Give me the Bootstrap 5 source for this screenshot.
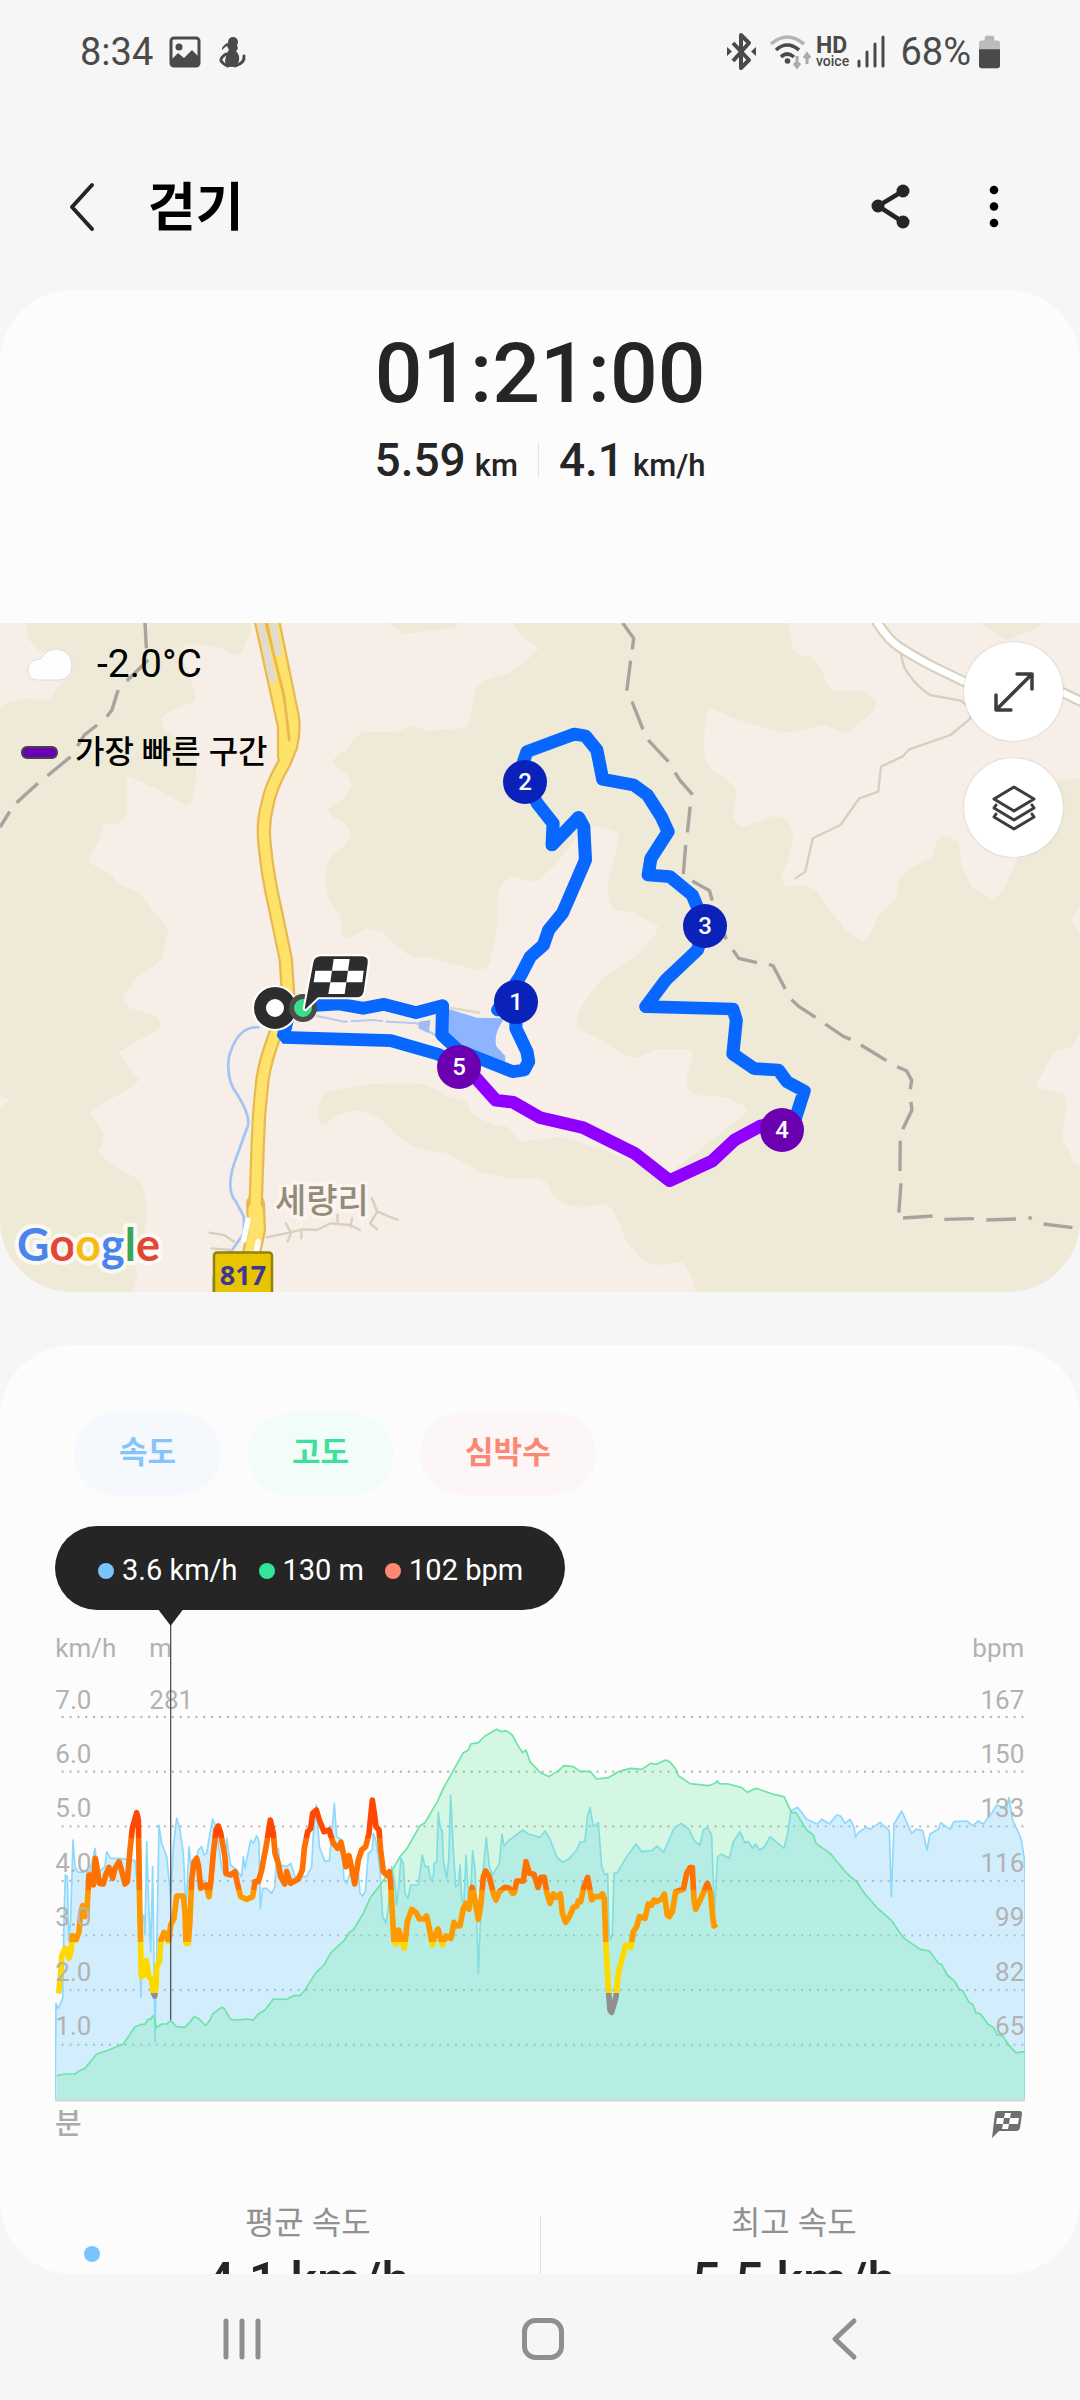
<!DOCTYPE html>
<html lang="ko">
<head>
<meta charset="utf-8">
<meta name="viewport" content="width=device-width, initial-scale=1">
<title>걷기</title>
<link href="https://cdn.jsdelivr.net/npm/bootstrap@5.3.0/dist/css/bootstrap.min.css" rel="stylesheet">
<style>
body{background:#f6f6f6;color:#252525;font-family:Roboto,"Noto Sans CJK KR",sans-serif;}
.screen{height:100vh;overflow:hidden}
.btn-plain{background:none;border:0;padding:0;display:flex;align-items:center;justify-content:center}
svg{display:block}
.statusbar{height:104px;padding:0 80px;color:#4a4a4a;font-size:38px;line-height:44px}
.titlebar{height:166px;margin-top:20px;padding:0 66px}
.titlebar h1{font-size:52px;line-height:60px;font-weight:700;color:#000;margin:4px 0 0 48px}
.more-btn{margin-left:63px}
.panel{background:#fcfcfc;border-radius:72px;overflow:hidden}
.summary{padding:34px 0 133px}
.clock{font-size:84px;line-height:100px;font-weight:500}
.figures{margin-top:6px;font-size:46px;line-height:60px;font-weight:500}
.figures .unit{font-size:31px;line-height:31px;margin-left:9px}
.figures .rule{width:1px;height:36px;background:#e2e2e2;margin:0 20px}
.mapbox{height:669px}
.mapbox>svg{width:100%;height:100%}
.map-info{left:21px;top:15px;color:#000}
.temp{font-size:39px;line-height:52px}
.temp span{margin-left:23px}
.legend{font-size:32px;line-height:44px;font-weight:500;margin-top:40px}
.legend i{width:37px;height:13px;border-radius:6px;background:#6a00b4;border:2px solid #444;margin-right:17px}
.map-tools{right:17px;top:19px;gap:17px}
.map-tools .btn-plain{width:99px;height:99px;border-radius:50%;background:#fff;box-shadow:0 0 2px #bbb}
.detail{margin-top:53px;min-height:0}
.chips{padding:68px 74px 0;gap:26px}
.chip{height:82px;border:0;border-radius:41px;padding:0 45px 2px;font-size:31px;font-weight:700}
.chip-speed{background:#f5f9fd;color:#86c5fb}
.chip-alt{background:#f2fcf8;color:#3fdf9c}
.chip-heart{background:#fcf6f6;color:#fb8872}
.bubble{margin:31px 55px 0;height:84px;border-radius:42px;background:#252525;color:#fff;padding:6px 42px 0 43px;font-size:29px;gap:21px;width:fit-content;white-space:nowrap}
.dot{width:16px;height:16px;border-radius:50%;flex:none}
.blue-dot{background:#7ac4fe}.green-dot{background:#35e49b}.red-dot{background:#ff8870}
.chart{margin:0 55px}
.chart svg{width:100%;height:auto}
.chart-foot{margin:0 58px 0 55px;padding-top:1px;color:#aaa;font-size:29px;line-height:36px;font-weight:500}
.stats{margin-top:61px;padding:0 33px}
.stat{flex:1 1 0;text-align:center}
.stat dt{font-size:32px;line-height:44px;font-weight:400;color:#919191;margin-top:-2px}
.stat dd{font-size:51px;line-height:60px;font-weight:500;margin:7px 0 0}
.stats .blue-dot{margin:43px 0 0 51px}
.stats .rule{width:1px;background:#e0e0e0;margin-top:12px}
.navkeys{height:126px;padding:4px 0 0 6px}
.navkeys .btn-plain{width:28%;height:100%}
</style>
<script src="https://cdn.jsdelivr.net/npm/bootstrap@5.3.0/dist/js/bootstrap.bundle.min.js"></script>
</head>
<body>
<div class="screen d-flex flex-column">

<div class="statusbar d-flex align-items-center justify-content-between flex-shrink-0">
  <div class="d-flex align-items-center">
    <span>8:34</span>
    <svg class="ms-3" width="32" height="32" viewBox="0 0 32 32"><rect x="2" y="2" width="28" height="28" rx="3" fill="none" stroke="#4a4a4a" stroke-width="3"/><circle cx="10" cy="11" r="3.5" fill="#4a4a4a"/><path d="M2 30V24L9 17L15 22L23 14L30 21V30Z" fill="#4a4a4a"/></svg>
    <svg class="ms-3" width="30" height="32" viewBox="0 0 30 32"><g fill="#4a4a4a"><circle cx="16" cy="6" r="5"/><path d="M10 10Q8 11 5 14Q4 11 10 7L20 9Q22 13 19 15Q23 19 22 25Q20 31 15 31Q9 31 8 25Q10 15 12 14Z"/></g><path d="M9 18Q3 22 4 25Q6 28 11 30M27 20Q28 27 18 30" fill="none" stroke="#4a4a4a" stroke-width="3" stroke-linecap="round"/></svg>
  </div>
  <div class="d-flex align-items-center">
    <svg width="174" height="40" viewBox="0 0 174 40" font-family="Roboto">
      <path d="M7 11L23 28L15 36V3L23 11L7 29" fill="none" stroke="#4a4a4a" stroke-width="4" stroke-linejoin="round"/><path d="M1 15L6 19.500L1 24ZM30 15L25 19.500L30 24Z" fill="#4a4a4a"/>
      <g fill="none" stroke-width="3.600"><path d="M45 12Q61 -2 78 12" stroke="#b5b5b5"/><path d="M50 18Q61 8 73 18M55 25Q61 19 68 25" stroke="#4a4a4a"/></g>
      <circle cx="61.500" cy="29" r="2.800" fill="#4a4a4a"/><path d="M71 24V34M68 31L71 35L74 31M81 32V23M78 26L81 22L84 26" fill="none" stroke="#aaa" stroke-width="3"/>
      <text x="90" y="21" font-size="23" font-weight="700" fill="#4a4a4a">HD</text><text x="90" y="34" font-size="14" font-weight="500" fill="#4a4a4a">voice</text>
      <path d="M133 29V34M141 20V34M149 12V34M157 5V34" stroke="#4a4a4a" stroke-width="3" stroke-linecap="round"/>
    </svg>
    <span>68%</span>
    <svg class="ms-2" width="21" height="34" viewBox="0 0 22 34"><rect x="6" width="10" height="7" rx="2" fill="#b5b5b5"/><rect y="5" width="22" height="29" rx="3" fill="#bcbcbc"/><path d="M0 14H22V31Q22 34 19 34H3Q0 34 0 31Z" fill="#4a4a4a"/></svg>
  </div>
</div>

<header class="titlebar d-flex align-items-center flex-shrink-0">
  <button class="btn-plain" type="button" aria-label="뒤로"><svg width="34" height="52" viewBox="0 0 34 52"><path d="M26 4L6 26L26 48" fill="none" stroke="#252525" stroke-width="4" stroke-linecap="round" stroke-linejoin="round"/></svg></button>
  <h1>걷기</h1>
  <button class="btn-plain ms-auto" type="button" aria-label="공유"><svg width="42" height="48" viewBox="0 0 42 48"><path d="M34 8L9 23L34 39" fill="none" stroke="#252525" stroke-width="4.500"/><g fill="#252525"><circle cx="34" cy="8" r="6.500"/><circle cx="9" cy="23" r="6.500"/><circle cx="34" cy="39" r="6.500"/></g></svg></button>
  <button class="btn-plain more-btn" type="button" aria-label="더보기"><svg width="40" height="48" viewBox="0 0 40 48"><circle cx="20" cy="7" r="4.300"/><circle cx="20" cy="23.500" r="4.300"/><circle cx="20" cy="40" r="4.300"/></svg></button>
</header>

<section class="panel flex-shrink-0">
  <div class="summary text-center">
    <div class="clock">01:21:00</div>
    <div class="figures d-flex justify-content-center align-items-center">
      <div>5.59<span class="unit">km</span></div><span class="rule"></span><div>4.1<span class="unit">km/h</span></div>
    </div>
  </div>
  <div class="mapbox position-relative">
    <svg viewBox="0 0 1080 669" preserveAspectRatio="xMidYMid slice" role="img" aria-label="경로 지도">
      <rect width="1080" height="669" fill="#f7eee8"/>
      <g transform="translate(0 -3) scale(.3444 .33333)">
        <g fill="#efead7">
          <path d="M75 9L85 60L110 90L150 105L210 150L170 200L150 230L130 242L80 235L30 245L0 265V1425L25 1440L0 1468V2016H385L400 1960L385 1920L415 1850L428 1795L420 1720Q415 1690 395 1675L320 1630L285 1595L300 1560V1540L260 1475L375 1405L405 1380L370 1340L345 1295L440 1240Q470 1220 465 1205T445 1184L380 1165Q350 1145 358 1125L400 1070L440 1045L470 1015L475 980L488 940L485 920L440 870L405 820L340 790L330 770L255 725L290 655L300 615L345 610Q370 590 370 550L368 480Q370 465 385 475L450 505L540 555Q558 555 560 530L568 480L570 420Q555 370 500 345Q470 330 468 300Q475 285 500 270L555 250Q572 240 568 225L530 110V85Q540 72 560 72L640 85L685 105Q700 105 705 90L725 45L730 9Z"/>
          <path d="M1130 9L1170 42L1320 25L1335 9ZM2848 9L2888 40L2923 60L2988 35L3033 9ZM1490 9L1505 38L1565 85L1530 120L1480 160Q1385 180 1380 215L1370 260Q1368 325 1335 325L1240 332L1200 315L1150 335L1060 335Q1030 345 1010 385L965 420L975 440L1010 465L1022 495L1000 535L948 570L965 590L1005 610L1022 645L1000 680Q945 710 945 770Q945 845 990 885V945L1005 958L1065 925L1110 935L1165 990L1200 1015L1240 1010L1310 1030L1380 1050Q1425 1050 1425 1010L1445 920V820Q1460 780 1490 770L1540 785L1568 775L1608 740L1668 660L1700 610L1748 625Q1800 625 1796 660L1768 780Q1755 850 1788 872L1833 875L1913 920L1898 950L1843 1010Q1750 1065 1723 1110Q1660 1190 1678 1225L1728 1250L1788 1290Q1840 1325 1862 1308L1908 1288H1998Q2010 1290 2010 1310L1993 1380Q2000 1430 2048 1427L2108 1432L2168 1460V1475L2068 1560L1968 1640L1938 1670L1768 1595L1628 1550L1510 1565L1475 1520L1430 1515L1370 1480L1355 1445L1300 1430Q1240 1390 1200 1390H1120L1050 1395L940 1415L925 1460V1505Q930 1518 945 1512Q990 1470 1040 1472Q1100 1480 1150 1545Q1200 1588 1240 1590L1300 1600L1390 1655L1490 1678L1568 1675L1588 1690Q1610 1760 1698 1763L1758 1752Q1785 1760 1813 1855Q1870 1940 1908 1935L1983 1927L2008 1970L2023 2016H3136V475L3078 480L2988 650L2953 720L2918 800L2888 840L2823 805L2793 740L2783 670Q2750 630 2718 665L2708 710L2628 755L2608 780L2603 835L2553 885L2528 940L2508 965L2458 935L2418 880L2368 810L2338 795L2283 800L2268 770L2288 720L2303 650Q2300 590 2248 588L2153 622L2128 600L2138 520Q2130 485 2073 455Q2040 425 2043 360L2053 275Q2060 260 2075 270L2128 295L2188 315L2268 338L2328 332L2388 315L2458 340L2508 300L2543 265V240L2508 212H2428Q2400 205 2395 175Q2375 110 2343 110Q2300 100 2300 70L2288 9Z"/>
        </g>
        <path fill="#f7eee8" d="M3136 860L3108 900L3136 945ZM3136 1235L3113 1280L3058 1295L3048 1320L3008 1395L3013 1405L3088 1420L3098 1450L3083 1560L3103 1590L3118 1635H3136Z"/>
        <g fill="none" stroke-linejoin="round" stroke-linecap="round">
          <g stroke="#d6d0c1" stroke-width="7"><path d="M2615 100L2625 140Q2650 190 2700 225L2790 242L2818 265V295L2760 345L2640 388L2620 410L2558 440L2550 515L2495 535L2440 615L2360 655L2338 755L2310 775"/><path d="M2548 9Q2580 60 2610 80Q2670 120 2720 145L2810 190L2900 220L3080 215L3136 243" stroke-width="33"/></g>
          <path d="M2548 9Q2580 60 2610 80Q2670 120 2720 145L2810 190L2900 220L3080 215L3136 243" stroke="#fff" stroke-width="20"/>
          <g stroke="#a6a49f" stroke-width="10" stroke-linecap="butt">
            <path d="M421 9L425 85M430 120L368 183M343 210L325 270L310 290M282 315L245 345L225 378M205 410L138 467M110 490L48 548M28 575L0 622"/>
            <path d="M1808 9L1840 55L1836 88M1831 122L1820 212M1835 245L1867 328M1882 360L1941 425M1960 458L1975 482L2011 524M2004 560L1996 637M1991 675L1984 762M2010 783L2060 812L2068 842M2098 920L2108 958M2128 990L2145 1015L2198 1028M2233 1033L2245 1038L2280 1107M2298 1139L2320 1160L2368 1192M2396 1212L2450 1250L2470 1258M2500 1275L2574 1322M2605 1340L2632 1352L2647 1380L2643 1408M2645 1446L2648 1470L2621 1528M2614 1562L2613 1653M2616 1690L2610 1778M2622 1794L2708 1788M2742 1798L2828 1796M2864 1800L2950 1797M2986 1793L2996 1795M3030 1812L3114 1823"/>
          </g>
          <path d="M750 1222Q690 1218 665 1310Q655 1380 690 1425Q735 1500 715 1530L680 1630Q655 1710 685 1745L708 1790V1840L620 1970V2016" stroke="#a5c3f5" stroke-width="8"/>
          <path d="M920 1188L1000 1205L1080 1200L1130 1205L1210 1210L1270 1250" stroke="#b8c8f1" stroke-width="6" stroke-dasharray="90 12"/><path d="M1215 1205L1250 1200L1245 1240L1215 1225Z" fill="#a3baf0"/>
          <path d="M1310 1164L1390 1178" stroke="#ddd8c8" stroke-width="8"/>
          <path fill="#8db5ff" d="M1295 1165L1385 1193L1465 1195Q1430 1245 1442 1280L1467 1308V1330L1350 1290L1290 1240Z"/>
          <g stroke="#d8cfc0" stroke-width="7"><path d="M775 1852L830 1840L880 1828L920 1830L960 1810L1015 1815L1045 1830M830 1810L845 1840L835 1865M875 1830V1855M980 1785V1810M1022 1795L1018 1820M1080 1735L1095 1775L1155 1800M1095 1775L1075 1810L1095 1828M608 1838L650 1845L680 1865M615 1885L670 1890"/></g>
          <g stroke="#e7b950" stroke-width="42"><path d="M757 0L825 320L825 410"/><path d="M792 0L850 290Q856 330 845 380L825 430Q785 500 775 560Q762 610 768 670Q777 770 800 870L830 1020L838 1150L800 1240Q770 1320 762 1380Q750 1480 748 1580L742 1760L745 1830L730 1900"/><path d="M742 1750L745 1830L730 1900" stroke-width="55"/></g>
          <g stroke="#ffe26a" stroke-width="29"><path d="M757 0L825 320L825 410"/><path d="M792 0L850 290Q856 330 845 380L825 430Q785 500 775 560Q762 610 768 670Q777 770 800 870L830 1020L838 1150L800 1240Q770 1320 762 1380Q750 1480 748 1580L742 1760L745 1830L730 1900"/><path d="M742 1770L745 1830L730 1900" stroke-width="42"/></g>
          <path d="M772 9L825 230L840 360" stroke="#e7b950" stroke-width="8"/>
          <path d="M755 0L792 180M792 0L808 98" stroke="#e1dad1" stroke-width="20"/>
          <path d="M720 1800L708 1860M750 1865L744 1895" stroke="#fff" stroke-width="16"/>
          <g stroke="#0867ff" stroke-width="38" stroke-linejoin="bevel" stroke-linecap="butt">
            <path d="M890 1158L985 1152L1055 1165L1115 1153L1208 1178L1285 1157L1283 1245L1330 1290L1488 1355L1522 1350L1535 1325L1530 1295L1498 1225L1498 1150L1445 1170L1510 1070L1540 1010L1578 975L1593 930L1633 880L1700 720L1695 620L1680 592L1603 675L1606 610L1560 550L1526 485L1520 425L1530 395L1668 342L1700 348L1733 390L1750 478L1840 495L1880 525L1920 590L1940 635L1890 715L1882 765L1945 770L2010 825L2048 918L2025 990L1933 1080L1875 1160L2128 1167L2138 1200L2128 1302L2190 1346L2260 1350L2285 1385L2335 1413L2302 1520" stroke-linejoin="round"/>
            <path d="M1320 1325L1270 1302L1135 1262L822 1252L835 1195"/>
          </g>
          <path d="M2271 1505L2208 1518L2133 1560L2068 1623L1944 1682L1843 1600L1693 1523L1568 1493L1490 1447L1440 1441L1335 1320" stroke="#9100ff" stroke-width="38"/>
        </g>
      </g>
      <g font-family="Roboto" font-weight="500" font-size="24" text-anchor="middle" fill="#fff">
        <circle cx="516" cy="379" r="22" fill="#0a22b9"/><text x="516" y="387">1</text>
        <circle cx="525" cy="159" r="22" fill="#0a22b9"/><text x="525" y="167">2</text>
        <circle cx="705" cy="303" r="22" fill="#0a22b9"/><text x="705" y="311">3</text>
        <circle cx="782" cy="507" r="22" fill="#6a00b0"/><text x="782" y="515">4</text>
        <circle cx="459" cy="444" r="22" fill="#6a00b0"/><text x="459" y="452">5</text>
      </g>
      <circle cx="275" cy="385" r="15" fill="#fff" stroke="#fff" stroke-width="16"/><circle cx="275" cy="385" r="15" fill="#fff" stroke="#2d2d2d" stroke-width="12"/>
      <circle cx="303" cy="385" r="11.500" fill="#3bdd8c" stroke="#4b4d4c" stroke-width="5"/>
      <g transform="translate(240 307) scale(.33333)"><path d="M240 76H368Q390 78 386 100L374 185Q370 205 350 205H235L198 240Q190 242 192 230L217 98Q220 78 240 76Z" fill="#2d2d2d" stroke="#fff" stroke-width="6"/><g fill="#fff"><path d="M281 87H329L324 122H276ZM226 122H276L271 157H221ZM324 122H371L367 157H319ZM271 157H319L314 192H265Z"/></g></g>
      <text x="275" y="590" font-family="Noto Sans CJK KR" font-size="34" font-weight="500" fill="#938d78" stroke="#fdf4f1" stroke-width="7" stroke-linejoin="round" paint-order="stroke">세량리</text>
      <rect x="214" y="629.500" width="58" height="52" rx="3" fill="#e7c500" stroke="#94800c" stroke-width="2.500"/>
      <text x="243" y="662" font-family="Noto Sans" font-size="27" font-weight="700" text-anchor="middle" fill="#3c3795">817</text>
      <text x="17" y="638" font-family="Lato" font-size="45" font-weight="700" stroke="#fff" stroke-opacity=".7" stroke-width="8" stroke-linejoin="round" paint-order="stroke"><tspan fill="#4a85ee">G</tspan><tspan fill="#e34636">o</tspan><tspan fill="#f7bc13">o</tspan><tspan fill="#4a85ee">g</tspan><tspan fill="#3aa755">l</tspan><tspan fill="#e34636">e</tspan></text>
    </svg>
    <div class="map-info position-absolute">
      <div class="temp d-flex align-items-center"><svg width="53" height="36" viewBox="0 0 53 36"><path d="M16 34Q7 33 7 23Q8 13 20 13Q26 2 37 3Q51 6 51 20Q50 33 39 34Z" fill="#fefefe" stroke="#ddd" stroke-width="1"/></svg><span>-2.0°C</span></div>
      <div class="legend d-flex align-items-center"><i></i>가장 빠른 구간</div>
    </div>
    <div class="map-tools position-absolute d-flex flex-column">
      <button class="btn-plain" type="button" aria-label="확대"><svg width="44" height="44" viewBox="0 0 44 44" fill="none" stroke="#3d3d3d" stroke-width="3.500" stroke-linecap="round" stroke-linejoin="round"><path d="M5 39L39 5M25 4H40V19M4 25V40H19"/></svg></button>
      <button class="btn-plain" type="button" aria-label="지도 레이어"><svg width="48" height="50" viewBox="0 0 48 50" fill="none" stroke="#3d3d3d" stroke-width="3" stroke-linecap="round" stroke-linejoin="round"><path d="M24 4L44 16L24 28L4 16ZM6 22L4 25L24 37L44 25L42 22M6 31L4 34L24 46L44 34L42 31"/></svg></button>
    </div>
  </div>
</section>

<section class="panel detail flex-grow-1">
  <div class="chips d-flex">
    <button class="chip chip-speed" type="button">속도</button>
    <button class="chip chip-alt" type="button">고도</button>
    <button class="chip chip-heart" type="button">심박수</button>
  </div>
  <div class="bubble d-flex align-items-center">
    <span class="d-flex align-items-center gap-2"><i class="dot blue-dot"></i>3.6 km/h</span>
    <span class="d-flex align-items-center gap-2"><i class="dot green-dot"></i>130 m</span>
    <span class="d-flex align-items-center gap-2"><i class="dot red-dot"></i>102 bpm</span>
  </div>
  <div class="chart">
    <svg viewBox="45 -30 2910 1485" role="img" aria-label="속도, 고도, 심박수 그래프">
      <defs><linearGradient id="zones" gradientUnits="userSpaceOnUse" x1="0" y1="500" x2="0" y2="1200">
        <stop offset=".222" stop-color="#ff4800"/><stop offset=".222" stop-color="#ff7100"/><stop offset=".443" stop-color="#ff7100"/><stop offset=".443" stop-color="#ff9900"/><stop offset=".664" stop-color="#ff9900"/><stop offset=".664" stop-color="#fdd900"/><stop offset=".885" stop-color="#fdd900"/><stop offset=".885" stop-color="#8f8f8f"/>
      </linearGradient></defs>
      <path d="M68 291H2955M68 455H2955M68 619H2955M68 783H2955M68 946H2955M68 1110H2955M68 1274H2955" fill="none" stroke="#b4b4b4" stroke-width="7" stroke-linecap="round" stroke-dasharray="0 23.600"/>
      <path d="M45 1440L48 1150L55 1165L68 1135L72 900L76 765L82 770L86 960L92 900L99 660L105 740L115 757L150 755L165 685L172 760L195 740L200 695L212 715L240 715L285 722L292 800L303 1132L306 900L311 885L315 945L320 665L326 850L332 995L338 740L345 1265L350 1000L357 615L365 670L380 710L392 830L400 680L410 595L418 620L430 700L438 870L447 680L455 760L465 740L475 690L485 680L492 705L500 700L510 640L518 597L528 620L545 740L555 770L560 655L572 735L590 750L605 770L610 710L615 745L632 660L640 670L650 647L657 665L661 865L668 805L680 805L695 820L705 800L710 690L715 685L720 735L740 740L752 730L765 770L800 770L815 740L820 640L829 555L838 680L855 725L868 722L875 650L883 550L890 650L905 660L912 780L920 790L930 760L945 770L955 760L960 820L968 828L976 815L985 700L997 690L1000 640L1007 660L1020 750L1028 890L1038 910L1045 860L1055 740L1065 790L1070 855L1076 800L1083 715L1090 730L1095 820L1104 835L1112 795L1135 795L1147 705L1155 740L1165 740L1172 780L1180 770L1182 730L1190 725L1195 577L1200 620L1207 635L1210 720L1220 775L1226 720L1232 525L1240 690L1247 800L1255 795L1260 735L1266 845L1272 845L1278 705L1286 840L1292 810L1298 692L1306 760L1315 1060L1325 800L1339 652L1348 740L1358 765L1378 730L1386 643L1392 678L1405 662L1425 648L1448 630L1465 642L1500 652L1515 633L1530 658L1550 710L1567 727L1585 718L1610 690L1620 667L1635 665L1642 590L1650 563L1660 620L1675 608L1685 740L1695 765L1703 760L1707 940L1712 958L1717 940L1722 760L1732 758L1755 718L1788 672L1805 695L1835 692L1852 678L1870 697L1885 665L1902 625L1923 610L1945 625L1965 665L1980 675L1990 630L2002 622L2015 645L2023 880L2033 710L2045 703L2068 715L2080 665L2100 635L2115 668L2125 665L2138 685L2146 672L2158 690L2172 682L2190 650L2232 685L2243 640L2253 572L2273 562L2300 598L2332 612L2345 598L2368 612L2390 585L2402 588L2415 610L2430 598L2442 620L2446 652L2455 638L2478 622L2490 628L2520 607L2548 632L2554 830L2562 612L2585 573L2615 640L2630 627L2648 632L2661 690L2670 642L2695 628L2702 608L2730 628L2742 605L2780 603L2798 617L2815 603L2830 612L2855 580L2870 555L2900 565L2907 533L2918 600L2943 655L2952 710L2955 755V1440" fill="#8fd8fc" fill-opacity=".38" stroke="#8dd9fb" stroke-width="5" stroke-linejoin="round"/>
      <path d="M50 1367L75 1362L105 1362L118 1352L135 1345L170 1302L200 1292L250 1272L265 1250L285 1220L305 1213L315 1213L325 1197L333 1198L338 1187L344 1197L350 1223L365 1212L380 1212L392 1202L410 1220L435 1222L448 1208L462 1190L475 1195L497 1217L510 1200L518 1182L545 1162L552 1165L572 1198L590 1200L620 1197L640 1200L655 1182L675 1170L700 1137L740 1138L760 1127L780 1127L795 1110L828 1058L852 1035L873 998L912 962L930 935L940 930L970 880L990 835L1035 775L1060 745L1080 710L1100 687L1140 617L1155 608L1192 545L1210 505L1235 460L1270 398L1285 390L1292 372L1315 368L1335 348L1370 328L1385 335L1398 332L1417 345L1430 370L1447 398L1458 390L1470 425L1500 457L1527 470L1555 452L1572 437L1600 440L1620 454L1650 454L1670 477L1705 473L1735 455L1772 445L1805 448L1832 430L1850 433L1877 420L1890 426L1908 448L1915 467L1950 491L2005 497L2025 490L2033 483L2038 491L2065 492L2105 503L2122 517L2148 505L2200 523L2232 530L2255 578L2268 578L2300 630L2320 645L2328 670L2370 700L2420 760L2450 785L2475 822L2515 867L2555 902L2590 953L2640 988L2668 993L2695 1030L2705 1033L2722 1065L2745 1085L2758 1108L2768 1112L2788 1148L2798 1153L2808 1178L2822 1182L2843 1212L2860 1222L2872 1245L2888 1248L2908 1277L2928 1298L2955 1295V1440H50Z" fill="#67e8a0" fill-opacity=".27"/>
      <path d="M50 1367L75 1362L105 1362L118 1352L135 1345L170 1302L200 1292L250 1272L265 1250L285 1220L305 1213L315 1213L325 1197L333 1198L338 1187L344 1197L350 1223L365 1212L380 1212L392 1202L410 1220L435 1222L448 1208L462 1190L475 1195L497 1217L510 1200L518 1182L545 1162L552 1165L572 1198L590 1200L620 1197L640 1200L655 1182L675 1170L700 1137L740 1138L760 1127L780 1127L795 1110L828 1058L852 1035L873 998L912 962L930 935L940 930L970 880L990 835L1035 775L1060 745L1080 710L1100 687L1140 617L1155 608L1192 545L1210 505L1235 460L1270 398L1285 390L1292 372L1315 368L1335 348L1370 328L1385 335L1398 332L1417 345L1430 370L1447 398L1458 390L1470 425L1500 457L1527 470L1555 452L1572 437L1600 440L1620 454L1650 454L1670 477L1705 473L1735 455L1772 445L1805 448L1832 430L1850 433L1877 420L1890 426L1908 448L1915 467L1950 491L2005 497L2025 490L2033 483L2038 491L2065 492L2105 503L2122 517L2148 505L2200 523L2232 530L2255 578L2268 578L2300 630L2320 645L2328 670L2370 700L2420 760L2450 785L2475 822L2515 867L2555 902L2590 953L2640 988L2668 993L2695 1030L2705 1033L2722 1065L2745 1085L2758 1108L2768 1112L2788 1148L2798 1153L2808 1178L2822 1182L2843 1212L2860 1222L2872 1245L2888 1248L2908 1277L2928 1298L2955 1295" fill="none" stroke="#6ee3a6" stroke-width="5" stroke-linejoin="round"/>
      <path d="M45 1441H2955" stroke="#cfdad6" stroke-width="7"/>
      <path d="M56 1120L62 1060L65 1010L75 985L82 990L87 1015L94 990L97 947L108 960L117 935L122 880L128 857L134 890L140 885L147 765L155 765L160 795L166 715L172 750L178 790L190 792L197 765L207 742L218 775L225 745L237 725L243 745L255 792L262 785L270 690L277 625L290 578L295 600L299 850L304 1070L312 1065L319 1022L326 1070L334 1075L340 1118L344 1128L348 1100L350 1040L358 1025L363 960L372 937L386 965L392 915L402 895L410 828L430 828L435 880L438 970L445 970L450 900L455 780L462 725L470 715L476 740L482 805L490 797L498 795L507 830L513 780L520 700L528 630L535 618L542 640L555 710L558 760L572 765L585 755L592 790L602 830L620 838L638 830L645 785L655 785L665 750L680 670L691 600L700 640L705 700L715 730L722 770L734 792L740 755L752 790L775 777L787 750L793 685L803 635L812 625L818 580L829 570L838 600L852 635L867 630L880 670L893 685L903 667L912 710L918 740L927 707L935 745L944 792L955 720L965 690L977 680L987 640L997 540L1003 580L1008 620L1017 630L1022 690L1030 755L1040 765L1048 755L1052 790L1057 880L1062 965L1070 972L1076 930L1085 960L1093 985L1102 905L1115 868L1130 880L1138 897L1152 897L1160 888L1167 920L1177 975L1185 945L1194 927L1207 975L1218 948L1233 955L1242 907L1248 918L1260 917L1270 865L1278 850L1287 868L1296 802L1305 840L1315 898L1323 850L1330 770L1337 753L1348 770L1360 820L1368 840L1378 815L1395 802L1408 805L1418 820L1423 818L1430 783L1450 783L1458 725L1468 760L1482 763L1494 802L1503 772L1513 772L1520 815L1530 850L1540 822L1548 832L1561 822L1567 880L1577 907L1588 890L1600 862L1610 858L1615 843L1622 845L1632 800L1643 772L1650 810L1655 840L1665 830L1680 830L1687 822L1693 835L1698 980L1706 1120L1710 1170L1715 1177L1728 1130L1735 1060L1748 1010L1757 975L1772 982L1780 935L1790 920L1798 890L1815 895L1825 852L1835 855L1842 840L1848 845L1865 837L1873 822L1882 885L1888 890L1897 875L1907 815L1930 808L1940 760L1950 743L1957 743L1962 840L1967 868L1985 830L2002 790L2012 820L2018 890L2022 918L2030 912" fill="none" stroke="url(#zones)" stroke-width="17" stroke-linejoin="round"/>
      <g font-family="Roboto" font-size="78" fill="#b2b2b2">
        <text x="46" y="110">km/h</text><text x="328" y="110">m</text><text x="328" y="267">281</text>
        <text x="46" y="267">7.0</text><text x="46" y="430">6.0</text><text x="46" y="592">5.0</text><text x="46" y="755">4.0</text><text x="46" y="918">3.0</text><text x="46" y="1082">2.0</text><text x="46" y="1245">1.0</text>
        <g text-anchor="end"><text x="2953" y="110">bpm</text><text x="2953" y="267">167</text><text x="2953" y="430">150</text><text x="2953" y="592">133</text><text x="2953" y="755">116</text><text x="2953" y="918">99</text><text x="2953" y="1082">82</text><text x="2953" y="1245">65</text></g>
      </g>
      <path d="M392 0V1200" stroke="#555" stroke-width="4"/><path d="M356 -30H428L392 17Z" fill="#252525"/>
    </svg>
  </div>
  <div class="chart-foot d-flex justify-content-between align-items-center"><span>분</span>
    <svg width="30" height="27" viewBox="0 0 30 27"><path d="M5 0H28Q30 0 30 3L28 17Q27 20 25 20H7L0 27L3 2Q4 0 5 0Z" fill="#6f6f6f"/><path d="M13 2H19L18 7H12ZM5 7H12L11 13H4ZM18 7H27L26 13H17ZM11 13H17L16 18H10Z" fill="#fff"/></svg>
  </div>
  <dl class="stats d-flex mb-0">
    <div class="stat d-flex"><i class="dot blue-dot"></i><div class="flex-grow-1 pe-4"><dt>평균 속도</dt><dd>4.1 km/h</dd></div></div>
    <span class="rule"></span>
    <div class="stat"><dt>최고 속도</dt><dd>5.5 km/h</dd></div>
  </dl>
</section>

<nav class="navkeys d-flex justify-content-center flex-shrink-0">
  <button class="btn-plain" type="button" aria-label="최근 앱"><svg width="40" height="44" viewBox="0 0 40 44"><path d="M4 4V40M20 4V40M36 4V40" stroke="#8f8f8f" stroke-width="5" stroke-linecap="round"/></svg></button>
  <button class="btn-plain" type="button" aria-label="홈"><svg width="44" height="44" viewBox="0 0 44 44"><rect x="3.500" y="3.500" width="37" height="37" rx="11" fill="none" stroke="#8f8f8f" stroke-width="5"/></svg></button>
  <button class="btn-plain" type="button" aria-label="뒤로 가기"><svg width="30" height="44" viewBox="0 0 30 44"><path d="M25 4L6 22L25 40" fill="none" stroke="#8f8f8f" stroke-width="5" stroke-linecap="round" stroke-linejoin="round"/></svg></button>
</nav>
</div>
</body>
</html>
